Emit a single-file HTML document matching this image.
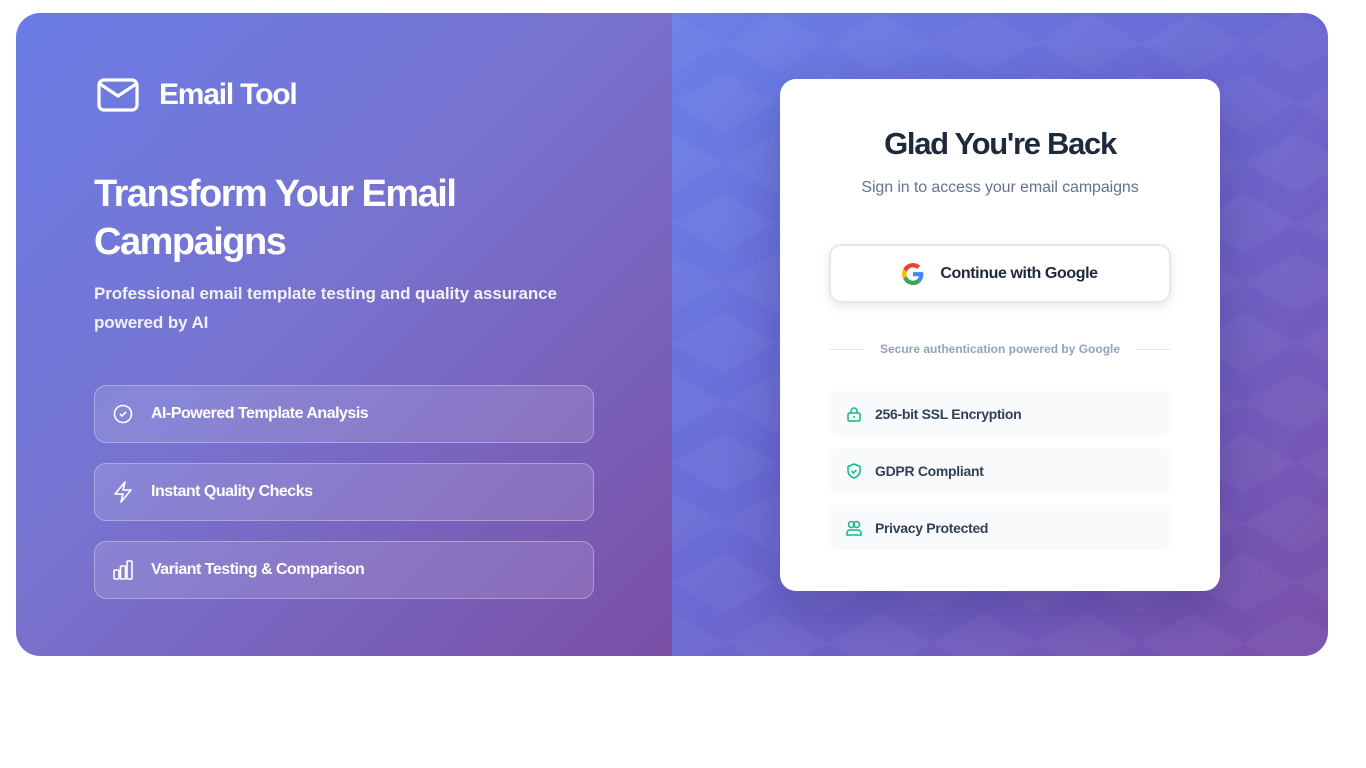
<!DOCTYPE html>
<html><head><meta charset="utf-8"><style>
*{box-sizing:border-box;margin:0;padding:0}
body{width:1366px;height:768px;background:#fff;font-family:"Liberation Sans",sans-serif;position:relative;overflow:hidden}
.wrap{position:absolute;left:16px;top:13px;width:1312px;height:643px;border-radius:24px;overflow:hidden;display:flex}
.left{width:656px;height:100%;background:linear-gradient(135deg,#6a7de6 0%,#7873cf 45%,#7a4fa6 100%);position:relative;color:#fff}
.right{width:656px;height:100%;background:linear-gradient(135deg,#6a80e8 0%,#6a6ad4 45%,#7a4fa8 100%);position:relative}
.pat{position:absolute;inset:0;opacity:.035}
.logo{position:absolute;left:81px;top:65px;display:flex;align-items:center}
.logo span{font-size:30px;font-weight:bold;letter-spacing:-1.2px;margin-left:20px}
h1{position:absolute;left:78px;top:157px;font-size:38px;line-height:48px;letter-spacing:-1.5px;font-weight:bold;width:480px}
.sub{position:absolute;left:78px;top:266px;font-size:17px;line-height:29px;font-weight:bold;color:rgba(255,255,255,.9);width:500px;letter-spacing:-.1px}
.feat{position:absolute;left:78px;width:500px;height:58px;border:1px solid rgba(255,255,255,.3);background:rgba(255,255,255,.13);border-radius:12px;display:flex;align-items:center;padding-left:18px;font-size:16px;font-weight:bold;letter-spacing:-.5px}
.feat svg{margin-right:18px}
.card{position:absolute;left:764px;top:66px;width:440px;height:512px;background:#fff;border-radius:16px;box-shadow:0 20px 50px rgba(40,30,100,.3);text-align:center}
.card h2{margin-top:47px;font-size:31px;letter-spacing:-1.3px;color:#1e293b}
.card .s{margin-top:17px;color:#64748b;font-size:16px;letter-spacing:-.1px}
.g{position:absolute;left:49px;top:165px;width:342px;height:59px;border:2px solid #e2e8f0;border-radius:12px;box-shadow:0 4px 10px rgba(100,116,139,.15);display:flex;align-items:center;justify-content:center;font-weight:bold;font-size:16px;letter-spacing:-.4px;color:#1e293b}
.g svg{margin-right:16px}
.div{position:absolute;left:49px;top:263px;width:342px;display:flex;align-items:center;font-size:12px;font-weight:bold;color:#94a3b8}
.div i{flex:1;height:1px;background:#e2e8f0}
.div b{padding:0 16px}
.it{position:absolute;left:49px;width:342px;height:45px;background:#f8fafc;border-radius:8px;display:flex;align-items:center;padding-left:17px;font-size:14px;font-weight:bold;color:#334155;letter-spacing:-.3px}
.it svg{margin-right:13px}
</style></head><body>
<div class="wrap">
<div class="left">
<div class="logo"><svg width="42" height="34" viewBox="0 0 42 34" fill="none" stroke="#fff" stroke-width="3.2" stroke-linejoin="round"><rect x="2" y="2" width="38" height="30" rx="5"/><path d="M3 6l18 12 18-12"/></svg><span>Email Tool</span></div>
<h1>Transform Your Email Campaigns</h1>
<div class="sub">Professional email template testing and quality assurance powered by AI</div>
<div class="feat" style="top:372px"><svg width="20" height="20" viewBox="0 0 20 20" fill="none" stroke="#fff" stroke-width="1.6"><circle cx="10" cy="10" r="8.5"/><path d="M7 10l2 2 4-4"/></svg>AI-Powered Template Analysis</div>
<div class="feat" style="top:450px"><svg width="20" height="22" viewBox="0 0 20 22" fill="none" stroke="#fff" stroke-width="1.6" stroke-linejoin="round"><path d="M12 1L2 13h8l-2 8 10-12h-8z"/></svg>Instant Quality Checks</div>
<div class="feat" style="top:528px"><svg width="20" height="20" viewBox="0 0 20 20" fill="none" stroke="#fff" stroke-width="1.6" stroke-linejoin="round"><rect x="1" y="10" width="5" height="9" rx="1"/><rect x="7.5" y="6" width="5" height="13" rx="1"/><rect x="14" y="1" width="5" height="18" rx="1"/></svg>Variant Testing &amp; Comparison</div>
</div>
<div class="right">
<svg class="pat" width="656" height="643"><defs><pattern id="p" width="104" height="120" patternUnits="userSpaceOnUse"><path d="M0 0L52 30 0 60z M104 0L52 30 104 60z M52 60L104 90 52 120z M52 60L0 90 52 120z" fill="#fff"/></pattern></defs><rect width="656" height="643" fill="url(#p)"/></svg>
</div>
<div class="card">
<h2>Glad You're Back</h2>
<div class="s">Sign in to access your email campaigns</div>
<div class="g"><svg width="22" height="22" viewBox="0 0 48 48"><path fill="#EA4335" d="M24 9.5c3.5 0 6.6 1.2 9 3.5l6.7-6.7C35.6 2.4 30.2 0 24 0 14.6 0 6.6 5.4 2.7 13.3l7.8 6C12.4 13.7 17.7 9.5 24 9.5z"/><path fill="#4285F4" d="M46.5 24.5c0-1.6-.1-3.1-.4-4.5H24v9h12.7c-.6 3-2.300 5.5-4.8 7.2l7.6 5.9c4.4-4.1 7-10.1 7-17.6z"/><path fill="#FBBC05" d="M10.5 28.7c-.5-1.4-.8-3-.8-4.7s.3-3.2.8-4.7l-7.8-6C1 16.6 0 20.2 0 24s1 7.4 2.7 10.7l7.8-6z"/><path fill="#34A853" d="M24 48c6.5 0 11.9-2.1 15.9-5.8l-7.6-5.9c-2.1 1.4-4.9 2.3-8.3 2.3-6.3 0-11.6-4.2-13.5-9.9l-7.8 6C6.6 42.6 14.6 48 24 48z"/></svg>Continue with Google</div>
<div class="div"><i></i><b>Secure authentication powered by Google</b><i></i></div>
<div class="it" style="top:312px"><svg width="16" height="16" viewBox="0 0 16 16" fill="none" stroke="#10b981" stroke-width="1.5"><rect x="2" y="7" width="12" height="8" rx="1.5"/><path d="M5 7V5a3 3 0 016 0v2"/><path d="M8 10v2"/></svg>256-bit SSL Encryption</div>
<div class="it" style="top:369px"><svg width="16" height="16" viewBox="0 0 16 16" fill="none" stroke="#10b981" stroke-width="1.5" stroke-linejoin="round"><path d="M8 1l6 2.5V8c0 3.5-3 6-6 7-3-1-6-3.5-6-7V3.5z"/><path d="M5.5 8l2 2 3-3"/></svg>GDPR Compliant</div>
<div class="it" style="top:426px"><svg width="16" height="16" viewBox="0 0 16 16" fill="none" stroke="#10b981" stroke-width="1.5"><circle cx="5.5" cy="4.5" r="3"/><circle cx="10.5" cy="4.5" r="3"/><path d="M1 15v-2a3 3 0 013-3h8a3 3 0 013 3v2z"/></svg>Privacy Protected</div>
</div>
</div>
</body></html>
